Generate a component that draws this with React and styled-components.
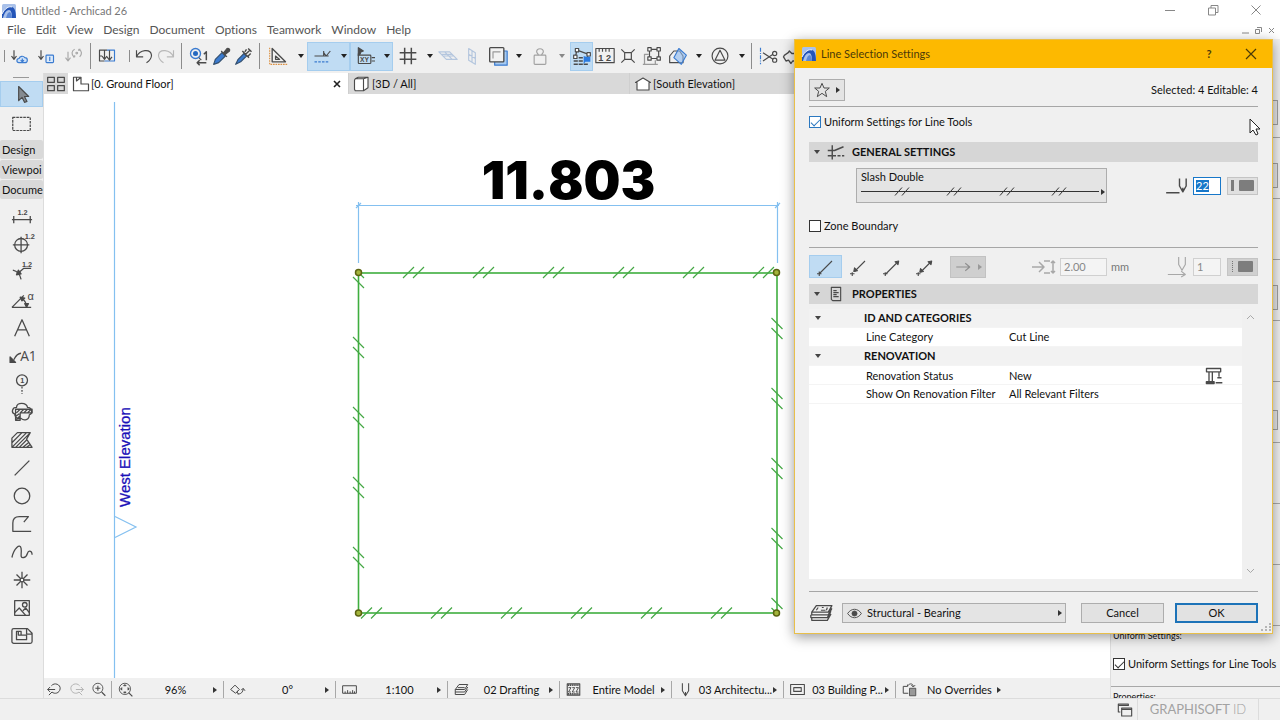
import { useState } from "react";
import styled, { createGlobalStyle, css } from "styled-components";

const INK = "#4a4a4a";
const BLUE = "#3a7bd0";

/* every glyph is drawn on a 24 x 24 grid */
const glyphs = {
    sendCloud: (
        <>
            <path d="M6 5v11M3 12l3 4 3-4" />
            <path d="M12 20h7a3 3 0 0 0 0-6 4 4 0 0 0-7 1 2.500 2.500 0 0 0 0 5zM16 19v-4M14 17l2 2 2-2" stroke={BLUE} fill="#cfe2f8" />
        </>
    ),
    sendBox: (
        <>
            <path d="M6 5v11M3 12l3 4 3-4" />
            <rect x="12" y="11" width="9" height="9" rx="1" stroke={BLUE} fill="#dceafa" />
            <path d="M16.500 13v5" stroke={BLUE} />
        </>
    ),
    sendSync: (
        <g stroke="#a8a8a8">
            <path d="M6 7v11M3 14l3 4 3-4" />
            <path d="M14 4c-4 2-4 6-1 9M19 4c4 2 4 6 1 9M12 13h2v-2M21 4h-2v2" />
            <circle cx="16.500" cy="8.500" r="1" />
        </g>
    ),
    publish: (
        <>
            <path d="M9 18H3V5h9M9 5v11M6 12l3 4 3-4M3 12h3" />
            <path d="M12 5h9v13h-9M12 18H9" stroke={BLUE} />
            <path d="M15 5v12M12 13l3 4 3-4" />
        </>
    ),
    undo: <path d="M3 5v8h8M3 13c4-9 17-10 18-2 0 4-3 7-6 9" />,
    redo: <path stroke="#b8b8b8" d="M21 5v8h-8M21 13c-4-9-17-10-18-2 0 4 3 7 6 9" />,
    find: (
        <>
            <circle cx="9" cy="9" r="6" stroke={BLUE} strokeWidth="1.600" />
            <circle cx="9" cy="9" r="3" fill="#2468c0" stroke="none" />
            <path d="M13 14l3 3" />
            <path d="M22 17V7l-3 3M22 20H12M14 17l-3 3 3 3" strokeWidth="1.800" />
        </>
    ),
    pipette: (
        <>
            <path d="M2 22l2-6 8-8 4 4-8 8z" fill={BLUE} stroke="#34506f" />
            <path d="M11 6l7 7M14 8l4-5c2-1 4 1 3 3l-5 4z" fill={INK} />
        </>
    ),
    inject: (
        <>
            <path d="M2 22l3-6 7-7 3 3-7 7z" fill={BLUE} stroke="#34506f" />
            <path d="M10 6l8 8M14 10l5-5M17 3l4 4M13 7l2-3M17 12l3-3" strokeWidth="1.700" />
        </>
    ),
    setSquare: (
        <>
            <path d="M5 3v16h16z" strokeWidth="1.600" />
            <path d="M9 12v4h5z" />
            <path d="M2 2v20h21" stroke="#dd9244" strokeDasharray="2 1" />
        </>
    ),
    guide: (
        <>
            <path d="M3 12h8M11 12h9M14 8l3 4 5-6M14 6v6" />
            <path d="M3 19h17" stroke={BLUE} strokeDasharray="3 1.500" />
        </>
    ),
    tracker: (
        <>
            <path d="M4 2l6 4-3 1-1 3-2 1z" fill={INK} />
            <rect x="4" y="11" width="15" height="10" rx="1" />
            <path d="M20 14h4M20 18h4M4 9v3" />
            <text x="6" y="19" fontSize="8" fontWeight="700" fontFamily="Liberation Sans" stroke="none" fill={INK}>XY</text>
        </>
    ),
    grid: <path d="M8 2v20M16 2v20M2 8h20M2 16h20" strokeWidth="1.800" />,
    skewGrid: <path stroke="#b4c6de" d="M1 7h13l9 9H10zM6 12h13M8 7l9 9M4 10h13" />,
    wallGrid: <path stroke="#b4c6de" d="M8 3l8 5v14l-8-5zM12 6v13M8 10l8 5" />,
    box: (
        <>
            <path d="M19 6h4v17H8v-4" stroke={BLUE} fill="#a7cbf2" />
            <rect x="2" y="2" width="17" height="17" rx="1" fill="#f2f2f2" strokeWidth="1.600" />
            <path d="M6 15V7h9" stroke="#999" />
        </>
    ),
    weight: (
        <g stroke="#a2a2a2">
            <path d="M10 11c0-2-2-2-2-4 0-5 8-5 8 0 0 2-2 2-2 4" />
            <rect x="5" y="11" width="14" height="11" rx="1" />
        </g>
    ),
    editGroup: (
        <>
            <path d="M4 13L6 5l14 5-2 4" strokeWidth="1.500" />
            <rect x="4" y="3" width="4" height="4" fill="#fff" />
            <rect x="18" y="8" width="4" height="4" fill="#fff" />
            <rect x="2" y="11" width="4" height="4" fill="#fff" />
            <path d="M8 14h5M2 18h11M2 22h17" strokeWidth="1.800" strokeDasharray="5 1" />
            <path d="M14 12v10l2-3h6v-6h-5z" fill="#2b7be0" stroke="none" />
        </>
    ),
    rulerNum: (
        <>
            <path d="M1 20V3h22v17zM5 3v4M9 3v4M13 3v4M17 3v4" />
            <text x="4" y="18" fontSize="11" fontWeight="700" fontFamily="Liberation Sans" stroke="none" fill={INK}>1 2</text>
        </>
    ),
    explode: (
        <>
            <rect x="8" y="8" width="8" height="8" />
            <path d="M4 4l4 4M20 4l-4 4M4 20l4-4M20 20l-4-4" />
        </>
    ),
    regroup: (
        <>
            <path d="M8 10H3v12h13v-5M1 22h4M14 22h5" stroke="#9a9a9a" strokeWidth="1.500" />
            <path d="M9 4h11v11H9z" />
            <rect x="7" y="2" width="4" height="4" fill="#fff" />
            <rect x="18" y="2" width="4" height="4" fill="#fff" />
            <rect x="7" y="13" width="4" height="4" fill="#fff" />
            <rect x="18" y="13" width="4" height="4" fill="#fff" />
        </>
    ),
    house3d: (
        <>
            <path d="M2 12l5-6h7l4 6v8H2z" />
            <path d="M13 3l9 8-6 11-9-8z" stroke={BLUE} fill="rgba(140,185,240,.6)" />
        </>
    ),
    triCircle: (
        <>
            <circle cx="12" cy="12" r="9.500" />
            <path d="M12 5l6 12H6z" />
        </>
    ),
    scissors: (
        <>
            <path d="M3 2v20" stroke={BLUE} strokeDasharray="5 1.500 1 1.500" />
            <circle cx="20" cy="9" r="2.500" />
            <circle cx="20" cy="17" r="2.500" />
            <path d="M6 8l12 8M6 18l12-8" />
        </>
    ),
    adjust: <path d="M3 13c1-4 6-3 7-7l3 3h6v9h-5l-2 3-3-4-3 1z" strokeWidth="1.600" />,
    arrow: <path d="M8 3v17l4-4 3 6 3-1-3-6h5z" fill="#858b91" />,
    marquee: <rect x="2" y="5" width="20" height="15" strokeDasharray="3 1" strokeWidth="1.400" />,
    dim: (
        <>
            <path d="M1 16h22M3 12v8M21 12v8" />
            <text x="7" y="11" fontSize="8" fontWeight="700" fontFamily="Liberation Sans" stroke="none" fill={INK}>1.2</text>
        </>
    ),
    level: (
        <>
            <circle cx="11" cy="13" r="7" />
            <path d="M11 4v18M2 13h18" />
            <text x="15" y="7" fontSize="8" fontWeight="700" fontFamily="Liberation Sans" stroke="none" fill={INK}>1.2</text>
        </>
    ),
    radial: (
        <>
            <path d="M2 10c5 1 8 5 9 10M8 13l6-5h8" />
            <path d="M6 15l5-1-3-4z" fill={INK} />
            <text x="12" y="7" fontSize="8" fontWeight="700" fontFamily="Liberation Sans" stroke="none" fill={INK}>1.2</text>
        </>
    ),
    angle: (
        <>
            <path d="M1 20h21M1 20L14 7M11 10c4 2 6 5 6 10" />
            <path d="M10 9l5 1-3 3zM15 16h4l-2 4z" fill={INK} />
            <text x="18" y="12" fontSize="12" fontFamily="Liberation Sans" stroke="none" fill={INK}>α</text>
        </>
    ),
    text: <path d="M4 21l8-18 8 18M7 14h10" />,
    label: (
        <>
            <path d="M3 16c2-4 5-7 8-7" />
            <path d="M-1 19v-6l6 6z" fill={INK} />
            <text x="10" y="17" fontSize="15" fontFamily="Open Sans" stroke="none" fill={INK}>A1</text>
        </>
    ),
    marker: (
        <>
            <circle cx="12" cy="8" r="6" />
            <path d="M12 15v8" strokeDasharray="2 1.500" />
            <text x="10" y="11" fontSize="8" fontWeight="700" fontFamily="Liberation Sans" stroke="none" fill={INK}>1</text>
        </>
    ),
    detail: (
        <>
            <path d="M6 7c0-6 11-6 12 0 5 0 6 7 2 8 0 6-6 7-9 4-4 1-7-1-7-5-4-1-3-7 2-7z" />
            <path d="M5 9h18v4H10v8H5zM6 13l4-4M10 13l4-4M14 13l4-4M18 13l4-4M5 17l4-3M6 20l4-4" />
        </>
    ),
    fill: (
        <path d="M1 20V10l6-6h14l-4 7 6 9zM1 15L12 4M1 20L17 4M5 20L20 5M9 20l8-8M13 20l6-5M17 20l4-3" />
    ),
    line: <path d="M4 20L20 4" />,
    circle: <circle cx="12" cy="12" r="8.500" />,
    polyline: <path d="M22 20H2V11c0-5 3-7 7-7h10l-5 6" />,
    spline: <path d="M1 18C3 8 10 2 11 8s-2 11 3 10 3-7 6-7 3 3 3 4" />,
    hotspot: (
        <>
            <path d="M12 3v18M3 12h18M6 6l12 12M18 6L6 18" />
            <circle cx="12" cy="12" r="2" fill="#fff" />
        </>
    ),
    figure: (
        <>
            <rect x="4" y="4" width="16" height="16" />
            <circle cx="15" cy="8.500" r="2.500" />
            <path d="M4 17l5-5 7 8M13 15l3-3 4 5" />
        </>
    ),
    drawing: (
        <>
            <path d="M1 6c0-1 1-2 2-2h15l5 5v9c0 1-1 2-2 2H3c-1 0-2-1-2-2zM17 4v6h6" />
            <path d="M6 7v9h11v-5h-6V7zM8 7v4h3" />
        </>
    ),
    grid4: <path d="M2 4h8v6H2zM14 4h8v6h-8zM2 14h8v6H2zM14 14h8v6h-8z" strokeWidth="1.500" />,
    plan: <path d="M2 3v18h20V12H12V3zM6 3v5l5-4" strokeWidth="1.600" fill="#fff" />,
    cube: <path d="M3 5h11v16H3l-1-2V7zM14 5l6-2v14l-6 4M3 5l4-2h13" strokeWidth="1.500" fill="#fff" />,
    elevation: <path d="M4 20V10H2l10-6 10 6h-2v10z" strokeWidth="1.500" fill="#fff" />,
    zoomPrev: <path d="M7 6c5-6 15-2 14 5-1 7-9 9-13 5l-5 5M1 12h12M5 8l-4 4 4 4" strokeWidth="1.600" />,
    zoomNext: <path stroke="#b4b4b4" d="M17 6C12 0 2 4 3 11c1 7 9 9 13 5l5 5M23 12H11M19 8l4 4-4 4" strokeWidth="1.600" />,
    zoomIn: (
        <>
            <circle cx="11" cy="10" r="8" />
            <path d="M17 16l6 6M7 10h8M11 6v8" strokeWidth="1.700" />
        </>
    ),
    zoomFit: (
        <>
            <circle cx="11" cy="11" r="9" />
            <path d="M17 17l6 6" strokeWidth="2" />
            <path d="M9 6l2-2 2 2zM9 16l2 2 2-2zM6 9l-2 2 2 2zM16 9l2 2-2 2z" fill={INK} />
        </>
    ),
    orient: <path d="M1 12l7-7 7 7-6 6zM12 19c5 1 9-3 9-8M18 13l3-3 3 4M12 14c-1 3 0 5 2 5" strokeWidth="1.600" />,
    ruler: <path d="M1 6h22v12H1zM5 18v-3M9 18v-5M13 18v-3M17 18v-5M20 18v-3" strokeWidth="1.600" />,
    layers: <path d="M2 12L8 4h14l-5 8zM2 16h15l5-8M2 20h15l5-8M2 12v8M6 9h11" strokeWidth="1.600" />,
    structure: (
        <>
            <path d="M2 3h20v18H2z" strokeWidth="1.800" />
            <path d="M3 5h18M3 19h18" strokeWidth="3" strokeDasharray="2 1" />
            <path d="M4 9h4l-4 7h4M10 9h4l-4 7h4M16 9h4l-4 7h4" strokeWidth="1.500" />
        </>
    ),
    pen: <path d="M7 2v12l5 8 5-8V2M12 22v-6" strokeWidth="1.700" />,
    frame: <path d="M1 4h22v16H1zM6 9h12v6H6z" strokeWidth="1.700" />,
    override: (
        <>
            <path d="M10 18H2V7h7M9 7V4M9 6c4-5 9-3 9 1M15 5l3 3 3-3" strokeWidth="1.600" />
            <path d="M12 10h10v12H12z" fill="#999" />
        </>
    ),
    windows: (
        <>
            <path d="M5 15H2V3h15v3M2 5h15" strokeWidth="1.700" />
            <path d="M7 9h15v12H7zM7 11h15" strokeWidth="1.700" />
        </>
    ),
    star: <path d="M12 2l3 7h8l-6 5 2 8-7-5-7 5 2-8-6-5h8z" strokeWidth="1.500" />,
    crossLines: <path d="M1 10h9l12-5M1 17h5m2 0h4m2 0h4m2 0h3M7 3v19" strokeWidth="1.900" />,
    sheet: <path d="M5 2h14v20H7l-2-2zM8 7h5M8 10h8M8 13h5M8 16h8" strokeWidth="1.700" />,
    crane: (
        <>
            <path d="M3 3h17v4H3zM6 7v12M10 7v12M18 7v6" strokeWidth="1.600" />
            <path d="M3 21v-2h9v2zM16 14h5M14 20h8" strokeWidth="1.900" />
        </>
    ),
    slabs: (
        <>
            <path d="M8 4h17l-4 7H3zM3 11v3h18l4-7M2 14v3h18l4-7M3 17v3h17l4-7" strokeWidth="1.400" />
            <path d="M10 6l-2 3M14 6h2M13 9h5M20 6l-1 3" strokeWidth="1.300" />
        </>
    ),
    eye: (
        <>
            <path d="M1 12c6-9 16-9 22 0-6 9-16 9-22 0z" strokeWidth="1.500" />
            <circle cx="12" cy="12" r="4" fill={INK} />
        </>
    ),
    noArrow: <path d="M3 21L20 4M3 18v6M0 21h6" strokeWidth="1.500" />,
    startArrow: (
        <>
            <path d="M6 18L20 4M3 19v5M0 21h6" strokeWidth="1.500" />
            <path d="M5 18l1-5 4 4z" fill={INK} />
        </>
    ),
    endArrow: (
        <>
            <path d="M3 22L18 7M3 19v5M0 21h6" strokeWidth="1.500" />
            <path d="M21 4l-1 5-4-4z" fill={INK} />
        </>
    ),
    bothArrow: (
        <>
            <path d="M6 19L19 6M3 19v5M0 21h6" strokeWidth="1.500" />
            <path d="M5 19l1-5 4 4zM21 4l-1 5-4-4z" fill={INK} />
        </>
    ),
    rightArrow: <path d="M3 12h18M15 7l6 5-6 5" stroke="#8f8f8f" strokeWidth="1.500" />,
    arrowSize: <path d="M0 12h11M7 7l5 5-5 5M12 6h6M12 18h6M21 6v12M19 8l2-2 2 2M19 16l2 2 2-2" stroke="#a8a8a8" strokeWidth="1.500" />,
    penLine: <path d="M-1 20h16M15 3v9l4 7 4-7V3M19 19v-5" strokeWidth="1.700" />,
    penArrow: <path d="M1 21h20M17 17l5 4-5 3M14 0v9l4 7 4-7V0" stroke="#a8a8a8" strokeWidth="1.400" />,
};

const Svg = styled.svg`
    display: block;
    flex: none;
    overflow: visible;
`;

function Icon({ name, size = 20 }) {
    return (
        <Svg width={size} height={size} viewBox="0 0 24 24" fill="none" stroke={INK} strokeWidth="1.400" strokeLinejoin="round" aria-hidden="true">
            {glyphs[name]}
        </Svg>
    );
}

function Logo({ size = 14 }) {
    return (
        <Svg width={size} height={size} viewBox="0 0 14 14" aria-hidden="true">
            <rect width="14" height="14" rx="1.500" fill="#a9c1ea" />
            <path d="M0 14V10C3 4 7 2 10 3c3 1 4 5 4 11h-4c0-5-1-8-3-8-3 0-5 4-6 8z" fill="#2455b8" />
            <path d="M4 14c1-4 2-6 4-6 1 1 2 3 2 6z" fill="#5c88d6" />
            <path d="M0 10C3 4 7 2 10 3" fill="none" stroke="#f2f6fc" />
        </Svg>
    );
}

const menus = ["File", "Edit", "View", "Design", "Document", "Options", "Teamwork", "Window", "Help"];

const tools = [
    { line: true, width: 8 },
    { icon: "sendCloud", width: 22 },
    { icon: "sendBox", width: 32 },
    { icon: "sendSync", width: 22 },
    { line: true, width: 12, tall: true },
    { icon: "publish", width: 22 },
    { width: 6 },
    { line: true, width: 10 },
    { icon: "undo", width: 20 },
    { icon: "redo", width: 24 },
    { line: true, width: 6, tall: true },
    { icon: "find", width: 28 },
    { icon: "pipette", width: 20 },
    { icon: "inject", width: 24 },
    { line: true, width: 6, tall: true },
    { icon: "setSquare", width: 32, caret: true },
    { icon: "guide", width: 30, caret: true, active: true },
    { icon: "tracker", width: 30, caret: true, active: true },
    { icon: "grid", width: 30, caret: true },
    { icon: "skewGrid", width: 24 },
    { icon: "wallGrid", width: 24 },
    { icon: "box", width: 28, caret: true },
    { icon: "weight", width: 30, caret: true, dim: true },
    { width: 2 },
    { icon: "editGroup", width: 23, active: true },
    { icon: "rulerNum", width: 23 },
    { icon: "explode", width: 24 },
    { icon: "regroup", width: 24 },
    { icon: "house3d", width: 28, caret: true },
    { icon: "triCircle", width: 30, caret: true },
    { line: true, width: 7, tall: true },
    { icon: "scissors", width: 26 },
    { icon: "adjust", width: 20 },
];

const drawTools = [
    "dim", "level", "radial", "angle", "text", "label", "marker", "detail",
    "fill", "line", "circle", "polyline", "spline", "hotspot", "figure", "drawing",
];

const quickOptions = [
    { icon: "zoomFit", label: "96%" },
    { icon: "orient", label: "0°" },
    { icon: "ruler", label: "1:100" },
    { icon: "layers", label: "02 Drafting" },
    { icon: "structure", label: "Entire Model" },
    { icon: "pen", label: "03 Architectu..." },
    { icon: "frame", label: "03 Building P..." },
    { icon: "override", label: "No Overrides" },
];

const properties = [
    { group: "ID AND CATEGORIES", rows: [["Line Category", "Cut Line"]] },
    {
        group: "RENOVATION",
        rows: [
            ["Renovation Status", "New", "crane"],
            ["Show On Renovation Filter", "All Relevant Filters"],
        ],
    },
];

const steps = [0, 1, 2, 3, 4, 5];

function FloorPlan() {
    return (
        <Plan viewBox="44 94 1066 584" preserveAspectRatio="xMinYMin slice" role="img" aria-label="Floor plan">
            <g fill="none" stroke="#84c0f0" strokeWidth="1.200">
                <path d="M114.500 102v600" />
                <path d="M115 516.500l21 10.500-21 10.500" />
                <path d="M356 205.500h423M358.500 202v61M777.500 202v61M356 208l5-5M775 208l5-5" />
            </g>
            <Dimension x="568.500" y="199" textAnchor="middle">11.803</Dimension>
            <MarkerText transform="translate(130 507) rotate(-90)">West Elevation</MarkerText>
            <g stroke="#3fae3f" strokeWidth="1.600" fill="none">
                <rect x="358.500" y="273" width="418.500" height="340" />
            </g>
            <g stroke="#45a845" strokeWidth="1.200" fill="none">
                {steps.map((n) => (
                    <path key={`t${n}`} d={`M${403 + n * 70} 278l11-11m-1 11l11-11`} />
                ))}
                {steps.map((n) => (
                    <path key={`b${n}`} d={`M${361 + n * 70} 618.500l11-11m-1 11l11-11`} />
                ))}
                {steps.slice(1, 5).map((n) => (
                    <path key={`l${n}`} d={`M353 ${267 + n * 70}l11 11m-11-1l11 11`} />
                ))}
                {steps.slice(0, 4).map((n) => (
                    <path key={`r${n}`} d={`M771.500 ${318 + n * 70}l11 11m-11-1l11 11`} />
                ))}
                <path d="M358 272l6 6M353 277l11 11M771.500 598l11 11M771.500 608l5 5" />
            </g>
            <g stroke="#5c6412" strokeWidth="1.500" fill="#a3b43c">
                <circle cx="358.500" cy="272.500" r="3" />
                <circle cx="776.500" cy="272.500" r="3" />
                <circle cx="358.500" cy="613" r="3" />
                <circle cx="776.500" cy="613" r="3" />
            </g>
        </Plan>
    );
}

function SettingsDialog() {
    const [uniform, setUniform] = useState(true);
    const [zone, setZone] = useState(false);
    const [ending, setEnding] = useState("noArrow");

    return (
        <Dialog role="dialog" aria-label="Line Selection Settings">
            <DialogTitle>
                <Logo />
                <h1>Line Selection Settings</h1>
                <TitleButton>?</TitleButton>
                <TitleButton aria-label="Close">
                    <Svg width="10" height="10" viewBox="0 0 10 10" stroke="#4b3a08" strokeWidth="1.200">
                        <path d="M0 0l10 10M10 0L0 10" />
                    </Svg>
                </TitleButton>
            </DialogTitle>
            <DialogBody>
                <Favorites>
                    <FlatButton aria-label="Favorites">
                        <Icon name="star" size={16} />
                        <Triangle />
                    </FlatButton>
                    <span>Selected: 4 Editable: 4</span>
                </Favorites>
                <Rule />
                <CheckLabel $height={29}>
                    <CheckBox $blue checked={uniform} onChange={() => setUniform(!uniform)} />
                    Uniform Settings for Line Tools
                </CheckLabel>
                <Section>
                    <Triangle $down />
                    <Icon name="crossLines" size={18} />
                    GENERAL SETTINGS
                </Section>
                <LineRow>
                    <LineType>
                        <span>Slash Double</span>
                        <Svg width="238" height="9" viewBox="0 0 238 9" stroke="#333" fill="none">
                            <path d="M0 4.500h238" />
                            <path d="M34 8.500l7-8M41 8.500l7-8M86 8.500l7-8M93 8.500l7-8M139 8.500l7-8M146 8.500l7-8M191 8.500l7-8M198 8.500l7-8" />
                        </Svg>
                        <Triangle />
                    </LineType>
                    <PenGroup>
                        <Icon name="penLine" />
                        <Field $width={28} $selected defaultValue="22" aria-label="Line pen" />
                        <PenSwatch aria-label="Pen colour">
                            <i />
                            <b />
                        </PenSwatch>
                    </PenGroup>
                </LineRow>
                <CheckLabel $height={20}>
                    <CheckBox checked={zone} onChange={() => setZone(!zone)} />
                    Zone Boundary
                </CheckLabel>
                <Rule $gap={11} />
                <EndingRow>
                    {["noArrow", "startArrow", "endArrow", "bothArrow"].map((name) => (
                        <EndingButton key={name} aria-label={name} $active={ending === name} onClick={() => setEnding(name)}>
                            <Icon name={name} size={18} />
                        </EndingButton>
                    ))}
                    <ArrowShape disabled aria-label="Arrow shape">
                        <Icon name="rightArrow" size={18} />
                        <Triangle $dim />
                    </ArrowShape>
                    <SizeGroup>
                        <Icon name="arrowSize" size={24} />
                        <Field $width={47} disabled defaultValue="2.00" aria-label="Arrow size" />
                        <span>mm</span>
                    </SizeGroup>
                    <PenGroup>
                        <Icon name="penArrow" />
                        <Field $width={28} disabled defaultValue="1" aria-label="Arrow pen" />
                        <PenSwatch disabled aria-label="Arrow pen colour">
                            <i />
                            <b />
                        </PenSwatch>
                    </PenGroup>
                </EndingRow>
                <Section>
                    <Triangle $down />
                    <Icon name="sheet" size={16} />
                    PROPERTIES
                </Section>
                <PropertyPane>
                    <PropertyTable>
                        {properties.map(({ group, rows }) => (
                            <tbody key={group}>
                                <tr>
                                    <th><Triangle $down /></th>
                                    <th colSpan={3}>{group}</th>
                                </tr>
                                {rows.map(([name, value, icon]) => (
                                    <tr key={name}>
                                        <td />
                                        <td>{name}</td>
                                        <td>{value}</td>
                                        <td>{icon && <Icon name={icon} />}</td>
                                    </tr>
                                ))}
                            </tbody>
                        ))}
                    </PropertyTable>
                    <Scroller>
                        <Svg width="7" height="5" viewBox="0 0 7 5" fill="none" stroke="#a9a9a9">
                            <path d="M0 4l3.500-3.500L7 4" />
                        </Svg>
                        <Svg width="7" height="5" viewBox="0 0 7 5" fill="none" stroke="#a9a9a9">
                            <path d="M0 0l3.500 3.500L7 0" />
                        </Svg>
                    </Scroller>
                </PropertyPane>
                <Rule />
                <DialogFooter>
                    <Icon name="slabs" size={22} />
                    <LayerButton>
                        <Icon name="eye" size={15} />
                        <span>Structural - Bearing</span>
                        <Triangle />
                    </LayerButton>
                    <PushButton>Cancel</PushButton>
                    <PushButton $primary>OK</PushButton>
                </DialogFooter>
            </DialogBody>
            <Grip width="10" height="9" viewBox="0 0 10 9" fill="#b5b5b5">
                <path d="M8 0h2v2H8zM4 3h2v2H4zM8 3h2v2H8zM0 6h2v2H0zM4 6h2v2H4zM8 6h2v2H8z" />
            </Grip>
            <Cursor width="13" height="18" viewBox="0 0 13 18" fill="#fff" stroke="#222">
                <path d="M1 1v14l3-3 3 5 2-1-2-5h4z" />
            </Cursor>
        </Dialog>
    );
}

function App() {
    return (
        <Window>
            <GlobalStyle />
            <TitleBar>
                <Logo />
                <span>Untitled - Archicad 26</span>
                <WindowButtons>
                    <Svg width="11" height="11" viewBox="0 0 11 11"><path d="M0 5.500h10" /></Svg>
                    <Svg width="11" height="11" viewBox="0 0 11 11"><path d="M.5 3h7v7h-7zM3 3V.5h7v7H8" /></Svg>
                    <Svg width="11" height="11" viewBox="0 0 11 11"><path d="M.5.500l9 9M9.500.500l-9 9" /></Svg>
                </WindowButtons>
            </TitleBar>
            <MenuBar>
                {menus.map((item) => (
                    <MenuItem key={item}>{item}</MenuItem>
                ))}
                <DocButtons>
                    <Svg width="7" height="7" viewBox="0 0 7 7"><path d="M0 6h7" /></Svg>
                    <Svg width="7" height="7" viewBox="0 0 7 7"><path d="M.5 2.500h4v4h-4zM2 .5h4.500V5" /></Svg>
                    <Svg width="7" height="7" viewBox="0 0 7 7"><path d="M1 1l5 5M6 1L1 6" /></Svg>
                </DocButtons>
            </MenuBar>
            <Toolbar>
                {tools.map((tool, index) =>
                    tool.icon ? (
                        <ToolGroup key={index} $active={tool.active}>
                            <ToolButton aria-label={tool.icon} $width={tool.width}>
                                <Icon name={tool.icon} size={20} />
                            </ToolButton>
                            {tool.caret && (
                                <CaretButton aria-label={`${tool.icon} options`}>
                                    <Caret $dim={tool.dim} />
                                </CaretButton>
                            )}
                        </ToolGroup>
                    ) : (
                        <Divider key={index} $width={tool.width} $line={tool.line} $tall={tool.tall} />
                    )
                )}
            </Toolbar>
            <Workspace>
                <Toolbox>
                    <Handle />
                    <SelectTool $active aria-label="Arrow"><Icon name="arrow" size={20} /></SelectTool>
                    <SelectTool aria-label="Marquee"><Icon name="marquee" size={21} /></SelectTool>
                    <ToolTabs>
                        <button>Design</button>
                        <button>Viewpoi</button>
                        <button>Docume</button>
                    </ToolTabs>
                    {drawTools.map((name) => (
                        <DrawTool key={name} aria-label={name}><Icon name={name} size={22} /></DrawTool>
                    ))}
                </Toolbox>
                <Center>
                    <TabBar>
                        <TabGrid aria-label="Tab overview"><Icon name="grid4" size={20} /></TabGrid>
                        <Tab $active>
                            <Icon name="plan" size={18} />
                            [0. Ground Floor]
                            <Svg width="6" height="6" viewBox="0 0 6 6" stroke="#222" strokeWidth="1.600"><path d="M0 0l6 6M6 0L0 6" /></Svg>
                        </Tab>
                        <Tab><Icon name="cube" size={18} />[3D / All]</Tab>
                        <Tab><Icon name="elevation" size={18} />[South Elevation]</Tab>
                    </TabBar>
                    <Canvas><FloorPlan /></Canvas>
                    <QuickBar>
                        <ZoomGroup>
                            <button aria-label="Previous zoom"><Icon name="zoomPrev" size={15} /></button>
                            <button aria-label="Next zoom"><Icon name="zoomNext" size={15} /></button>
                            <button aria-label="Zoom in"><Icon name="zoomIn" size={15} /></button>
                        </ZoomGroup>
                        {quickOptions.map(({ icon, label }) => (
                            <QuickOption key={icon}>
                                <Icon name={icon} size={15} />
                                <span>{label}</span>
                                <Triangle />
                            </QuickOption>
                        ))}
                    </QuickBar>
                </Center>
                <InfoBox>
                    <InfoSection><InfoButton $height={25} aria-label="Favorites" /></InfoSection>
                    <InfoSection><InfoButton $height={25} aria-label="Line type" /></InfoSection>
                    <InfoSection />
                    <InfoSection><InfoButton $height={25} aria-label="Layer" /></InfoSection>
                    <InfoSection />
                    <InfoSection><InfoButton $height={20} aria-label="Pen" /></InfoSection>
                    <InfoSection />
                    <InfoSection />
                    <InfoSection />
                    <UniformBox>
                        <small>Uniform Settings:</small>
                        <CheckLabel $height={40}>
                            <CheckBox defaultChecked />
                            Uniform Settings for Line Tools
                        </CheckLabel>
                    </UniformBox>
                    <PropertiesLabel>Properties:</PropertiesLabel>
                </InfoBox>
            </Workspace>
            <Footer>
                <Icon name="windows" size={16} />
                <AccountLink href="#account">GRAPHISOFT <em>ID</em></AccountLink>
            </Footer>
            <SettingsDialog />
        </Window>
    );
}

export default App;

const GlobalStyle = createGlobalStyle`
    * {
        box-sizing: border-box;
    }
    body {
        margin: 0;
        overflow: hidden;
        font-family: Lato, "Open Sans", sans-serif;
        font-size: 11px;
        font-variant-ligatures: none;
        line-height: 16px;
        color: #111;
    }
    button, input {
        font: inherit;
        color: inherit;
        padding: 0;
        margin: 0;
        border: 0;
        background: none;
    }
`;

const Window = styled.div`
    position: relative;
    display: flex;
    flex-direction: column;
    min-height: 100vh;
    background: #fff;
`;

const TitleBar = styled.header`
    display: flex;
    align-items: center;
    gap: 5px;
    height: 21px;
    padding: 0 18px 0 2px;
    color: #777;
`;

const WindowButtons = styled.div`
    display: flex;
    gap: 32px;
    margin-left: auto;
    svg {
        fill: none;
        stroke: #888;
    }
`;

const MenuBar = styled.nav`
    display: flex;
    align-items: center;
    height: 18px;
    padding-left: 2px;
    color: #555;
    font-size: 12px;
`;

const MenuItem = styled.button`
    padding: 0 5px;
`;

const DocButtons = styled(WindowButtons)`
    gap: 6px;
    padding-right: 5px;
`;

const Toolbar = styled.div`
    display: flex;
    align-items: center;
    height: 34px;
    background: #f0f0f0;
    overflow: hidden;
`;

const activeTool = css`
    background: #c0dcf3;
    box-shadow: inset 0 0 0 1px #a5cdee;
`;

const ToolGroup = styled.div`
    display: flex;
    flex: none;
    height: 29px;
    ${(props) => props.$active && activeTool}
`;

const ToolButton = styled.button`
    display: flex;
    align-items: center;
    justify-content: center;
    width: ${(props) => props.$width}px;
`;

const CaretButton = styled.button`
    display: flex;
    align-items: center;
    justify-content: center;
    width: 13px;
`;

const Caret = styled.span`
    border: 3px solid transparent;
    border-top: 4px solid ${(props) => (props.$dim ? "#888" : "#222")};
    border-bottom: 0;
`;

const Divider = styled.span`
    display: flex;
    flex: none;
    justify-content: center;
    width: ${(props) => props.$width}px;
    &::before {
        content: "";
        width: ${(props) => (props.$line ? "1px" : "0")};
        height: ${(props) => (props.$tall ? "26px" : "12px")};
        background: #8c8c8c;
    }
`;

const Workspace = styled.main`
    display: flex;
    flex: 1;
`;

const Toolbox = styled.aside`
    display: flex;
    flex: none;
    flex-direction: column;
    width: 44px;
    background: #f0f0f0;
    border-right: 1px solid #dcdcdc;
`;

const Handle = styled.span`
    width: 16px;
    height: 8px;
    margin-left: 13px;
    background: linear-gradient(#999, #999) 0 4px / 100% 1px no-repeat;
`;

const SelectTool = styled.button`
    display: flex;
    align-items: center;
    justify-content: center;
    height: ${(props) => (props.$active ? "26px" : "33px")};
    ${(props) => props.$active && activeTool}
`;

const ToolTabs = styled.div`
    display: grid;
    gap: 1px;
    margin-bottom: 3px;
    button {
        height: 19px;
        padding-left: 2px;
        border-radius: 2px;
        background: #d9d9d9;
        text-align: left;
        overflow: hidden;
    }
`;

const DrawTool = styled.button`
    display: flex;
    align-items: center;
    justify-content: center;
    height: 28px;
`;

const Center = styled.section`
    display: flex;
    flex: 1;
    flex-direction: column;
    min-width: 0;
`;

const TabBar = styled.div`
    display: flex;
    height: 21px;
`;

const TabGrid = styled.button`
    display: flex;
    align-items: center;
    justify-content: center;
    width: 24px;
    background: #d9d9d9;
`;

const Tab = styled.button`
    display: flex;
    flex: none;
    align-items: center;
    gap: 1px;
    width: 281px;
    padding: 0 8px 0 4px;
    background: ${(props) => (props.$active ? "#fff" : "#d9d9d9")};
    border-right: 1px solid #cfcfcf;
    svg:last-child:not(:first-child) {
        margin-left: auto;
    }
`;

const Canvas = styled.div`
    display: flex;
    flex: 1;
    min-height: 0;
    background: #fff;
`;

const Plan = styled.svg`
    flex: 1;
    min-width: 0;
    height: 584px;
`;

const Dimension = styled.text`
    font-family: Inter, "Liberation Sans", sans-serif;
    font-size: 52px;
    font-weight: 900;
    font-kerning: none;
`;

const MarkerText = styled.text`
    font-family: "Liberation Sans", Arial, sans-serif;
    font-size: 15px;
    fill: #1a10b8;
    stroke: #1a10b8;
    stroke-width: 0.3px;
`;

const QuickBar = styled.div`
    display: flex;
    height: 20px;
    padding-top: 3px;
    background: #f0f0f0;
`;

const ZoomGroup = styled.div`
    display: flex;
    align-items: center;
    gap: 7px;
    width: 67px;
    padding-left: 3px;
`;

const QuickOption = styled.button`
    display: grid;
    grid-template-columns: 26px 75px 10px;
    align-items: center;
    width: 112px;
    border-left: 1px solid #a8a8a8;
    svg {
        justify-self: center;
    }
    span {
        white-space: nowrap;
    }
`;

/* small filled arrow, points right unless $down is set */
const Triangle = styled.i`
    flex: none;
    width: 0;
    height: 0;
    border: 3px solid transparent;
    ${(props) =>
        props.$down
            ? "border-top: 4px solid #444; border-bottom: 0;"
            : `border-left: 4px solid ${props.$dim ? "#999" : "#333"}; border-right: 0;`}
`;

const InfoBox = styled.aside`
    display: flex;
    flex: none;
    flex-direction: column;
    width: 170px;
    height: 625px;
    overflow: hidden;
    background: #f0f0f0;
    border-left: 1px solid #ddd;
`;

const InfoSection = styled.div`
    display: flex;
    flex: none;
    align-items: center;
    height: 61px;
    padding: 15px 2px 0;
    border-bottom: 1px solid #a8a8a8;
    &:first-child {
        height: 65px;
    }
`;

const InfoButton = styled.button`
    width: 100%;
    height: ${(props) => props.$height}px;
    background: #e6e6e6;
    border: 1px solid #a0a0a0;
`;

const UniformBox = styled.div`
    flex: none;
    padding: 2px 0 2px 2px;
    border-bottom: 1px solid #a8a8a8;
    small {
        display: block;
        font-size: 9px;
    }
`;

const PropertiesLabel = styled.div`
    padding: 2px;
    font-size: 9px;
`;

const Footer = styled.footer`
    display: flex;
    align-items: center;
    justify-content: flex-end;
    gap: 4px;
    height: 22px;
    padding-right: 21px;
    background: #f0f0f0;
    border-top: 1px solid #dcdcdc;
`;

const AccountLink = styled.a`
    width: 122px;
    text-align: center;
    border: solid #dcdcdc;
    border-width: 0 1px;
    font-size: 13px;
    line-height: 21px;
    color: #a2a2a2;
    text-decoration: none;
    em {
        font-style: normal;
        font-weight: 300;
    }
`;

const Dialog = styled.section`
    position: absolute;
    top: 39px;
    right: 7px;
    width: 479px;
    background: #f0f0f0;
    border: 1px solid #e8bf4a;
    box-shadow: 0 3px 12px rgba(0, 0, 0, 0.4);
`;

const DialogTitle = styled.header`
    display: flex;
    align-items: center;
    gap: 5px;
    height: 28px;
    padding: 0 11px 0 7px;
    background: #fdb900;
    color: #4b3a08;
    h1 {
        flex: 1;
        margin: 0;
        font-size: 11px;
        font-weight: 400;
    }
`;

const TitleButton = styled.button`
    display: flex;
    align-items: center;
    justify-content: center;
    width: 20px;
    height: 20px;
    font-weight: 700;
    & + & {
        margin-left: 17px;
    }
`;

const DialogBody = styled.div`
    display: flex;
    flex-direction: column;
    padding: 11px 14px 9px;
`;

const Favorites = styled.div`
    display: flex;
    align-items: center;
    justify-content: space-between;
    margin-bottom: 5px;
`;

const FlatButton = styled.button`
    display: flex;
    align-items: center;
    justify-content: center;
    gap: 6px;
    width: 36px;
    height: 22px;
    background: #e4e4e4;
    border: 1px solid #adadad;
`;

const Rule = styled.hr`
    width: 100%;
    height: 1px;
    margin: ${(props) => props.$gap || 0}px 0 0;
    border: 0;
    background: #a6a6a6;
`;

const CheckLabel = styled.label`
    display: flex;
    align-items: center;
    gap: 3px;
    height: ${(props) => props.$height}px;
    white-space: nowrap;
`;

const CheckBox = styled.input.attrs({ type: "checkbox" })`
    appearance: none;
    flex: none;
    width: 12px;
    height: 12px;
    background: #fff;
    border: 1px solid ${(props) => (props.$blue ? "#2b78c0" : "#333")};
    &:checked::after {
        content: "";
        display: block;
        width: 8px;
        height: 4px;
        margin: 2px 0 0 1px;
        border: solid ${(props) => (props.$blue ? "#2b78c0" : "#333")};
        border-width: 0 0 1px 1px;
        transform: rotate(-45deg);
    }
`;

const Section = styled.h2`
    display: flex;
    align-items: center;
    gap: 6px;
    height: 20px;
    margin: 6px 0 0;
    padding-left: 5px;
    background: #d6d6d6;
    font-size: 11px;
    font-weight: 700;
    svg {
        width: 20px;
    }
`;

const LineRow = styled.div`
    display: flex;
    align-items: center;
    justify-content: space-between;
    height: 35px;
    margin: 6px 0 13px;
    padding-left: 47px;
`;

const LineType = styled.button`
    display: grid;
    grid-template-columns: 1fr 5px;
    align-content: start;
    align-items: center;
    width: 251px;
    height: 35px;
    padding: 0 0 5px 4px;
    background: #e4e4e4;
    border: 1px solid #adadad;
    text-align: left;
    span {
        grid-column: 1 / 3;
        margin-bottom: 2px;
    }
`;

const PenGroup = styled.div`
    display: flex;
    align-items: center;
    gap: 6px;
    margin-left: auto;
`;

const Field = styled.input`
    width: ${(props) => props.$width}px;
    height: 18px;
    padding: 0 3px;
    background: #fff;
    border: 1px solid #d0d0d0;
    &:disabled {
        background: #f4f4f4;
        color: #888;
    }
    ${(props) =>
        props.$selected &&
        css`
            padding: 0 2px;
            background: linear-gradient(#1777c9, #1777c9) 2px 2px / 13px 12px no-repeat #fff;
            border-color: #1777c9;
            color: #fff;
        `}
`;

const PenSwatch = styled.button`
    display: flex;
    align-items: center;
    justify-content: center;
    gap: 5px;
    width: 31px;
    height: 18px;
    background: #e0e0e0;
    border: 1px solid #c4c4c4;
    i {
        width: 3px;
        height: 11px;
        background: #7d7d7d;
    }
    b {
        width: 15px;
        height: 11px;
        border-radius: 1px;
        background: #7d7d7d;
    }
    &:disabled {
        background: #d0d0d0;
    }
    &:disabled i {
        width: 1px;
        background: repeating-linear-gradient(#777 0 1px, #ccc 1px 2px);
    }
`;

const EndingRow = styled.div`
    display: flex;
    align-items: center;
    height: 23px;
    margin-top: 7px;
`;

const EndingButton = styled.button`
    display: flex;
    align-items: center;
    justify-content: center;
    width: 33px;
    height: 23px;
    ${(props) => props.$active && activeTool}
`;

const ArrowShape = styled(FlatButton)`
    margin-left: 9px;
    background: #cfcfcf;
    border-color: #c2c2c2;
`;

const SizeGroup = styled.div`
    display: flex;
    align-items: center;
    gap: 4px;
    margin-left: 46px;
    color: #777;
`;

const PropertyPane = styled.div`
    display: flex;
    min-height: 270px;
    margin: 5px 0 12px;
`;

const PropertyTable = styled.table`
    flex: 1;
    display: block;
    background: #fff;
    border-collapse: collapse;
    tbody {
        display: block;
    }
    tr {
        display: grid;
        grid-template-columns: 57px 143px 1fr 38px;
        align-items: center;
        height: 19px;
        border-bottom: 1px solid #f4f4f4;
    }
    tr:first-child {
        grid-template-columns: 55px 1fr;
        background: #f2f2f2;
    }
    th,
    td {
        padding: 0;
        text-align: left;
        white-space: nowrap;
    }
    th:first-child {
        padding-left: 6px;
    }
    th i {
        display: block;
    }
`;

const Scroller = styled.div`
    display: flex;
    flex-direction: column;
    align-items: center;
    justify-content: space-between;
    width: 16px;
    padding: 6px 0 5px;
    background: #f0f0f0;
`;

const DialogFooter = styled.div`
    display: flex;
    align-items: center;
    gap: 15px;
    margin-top: 10px;
`;

const PushButton = styled.button`
    width: 83px;
    height: 20px;
    background: #e2e2e2;
    border: ${(props) => (props.$primary ? "2px solid #1d73b8" : "1px solid #adadad")};
    & + & {
        margin-left: -4px;
    }
`;

const LayerButton = styled(FlatButton)`
    flex: 1;
    height: 20px;
    margin-left: -4px;
    padding: 0 3px 0 4px;
    gap: 5px;
    span {
        flex: 1;
        text-align: left;
    }
`;

const Grip = styled(Svg)`
    position: absolute;
    right: 1px;
    bottom: 1px;
`;

const Cursor = styled(Svg)`
    position: absolute;
    top: 78px;
    right: 10px;
`;
